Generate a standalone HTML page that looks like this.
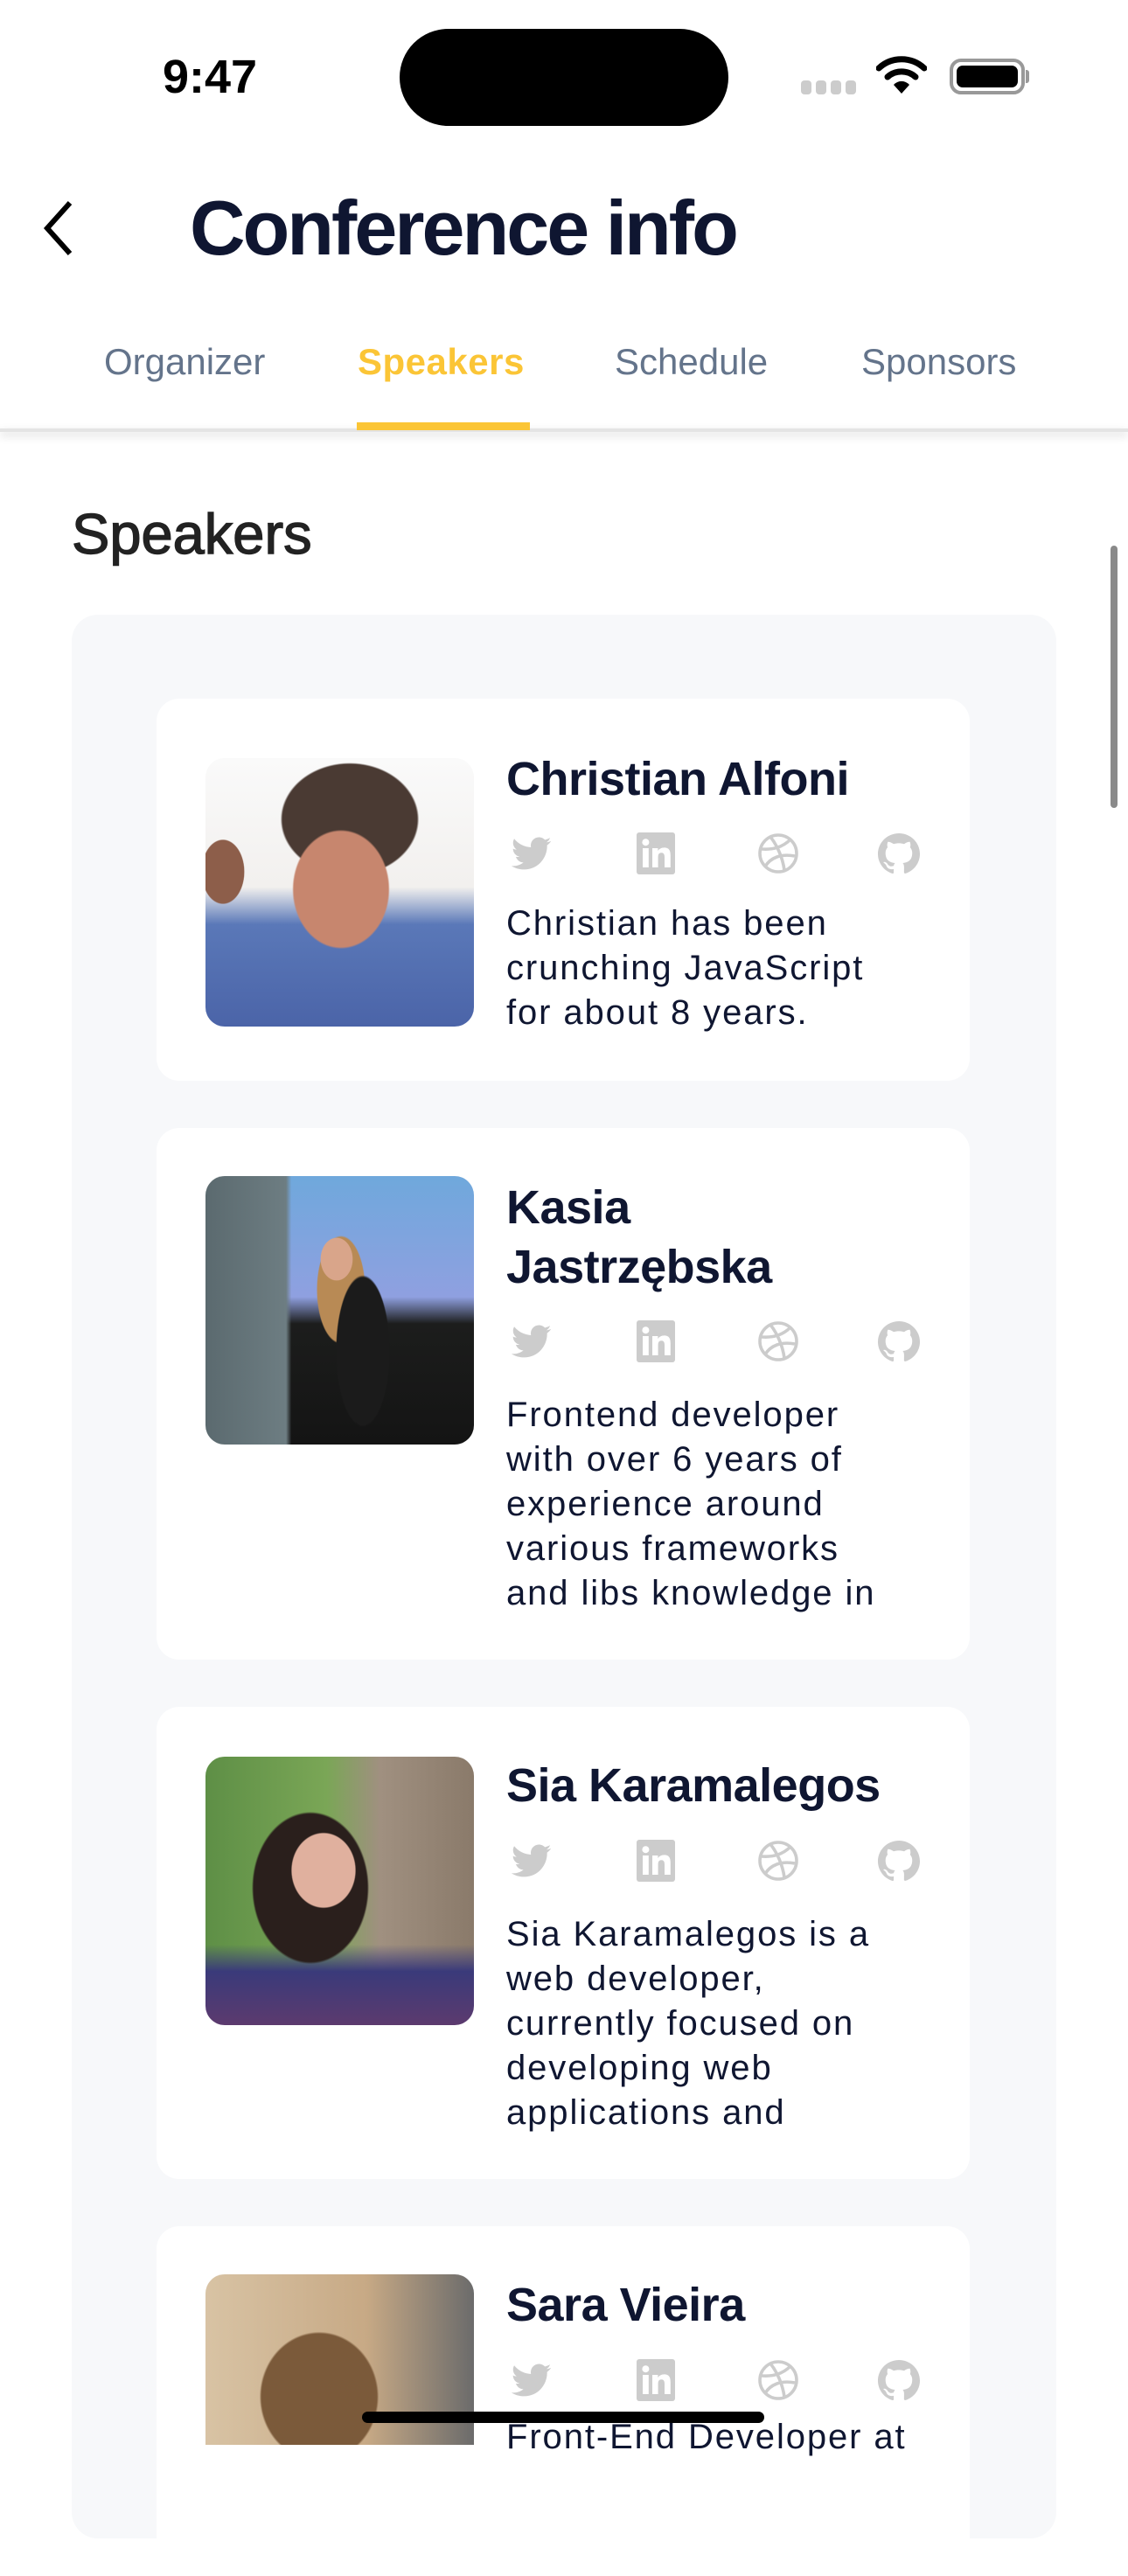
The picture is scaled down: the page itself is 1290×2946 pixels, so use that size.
<!DOCTYPE html>
<html><head><meta charset="utf-8"><style>
*{margin:0;padding:0;box-sizing:border-box}
body{width:1290px;height:2796px;position:relative;overflow:hidden;background:#fff;font-family:"Liberation Sans",sans-serif;color:#0f1631}
.a{position:absolute;white-space:nowrap}
.card{position:absolute;left:179px;width:930px;background:#fff;border-radius:26px}
.photo{position:absolute;left:235px;width:307px;height:307px;border-radius:22px;overflow:hidden}
.name{position:absolute;left:579px;font-size:54px;line-height:68px;font-weight:bold;letter-spacing:-0.5px;color:#0f1631}
.bio{position:absolute;left:579px;font-size:40px;line-height:51px;letter-spacing:1.9px;color:#0f1631;white-space:nowrap}
.ic{position:absolute;width:56px;height:48px}
</style></head><body>
<!-- status bar -->
<div class="a" style="left:186px;top:58px;font-size:54px;line-height:60px;font-weight:bold;color:#000">9:47</div>
<div class="a" style="left:457px;top:33px;width:376px;height:111px;background:#000;border-radius:56px"></div>
<div class="a" style="left:916px;top:92px;width:64px;height:16px">
<div style="position:absolute;left:0;width:12px;height:16px;border-radius:4px;background:#ccc"></div>
<div style="position:absolute;left:17px;width:12px;height:16px;border-radius:4px;background:#ccc"></div>
<div style="position:absolute;left:34px;width:12px;height:16px;border-radius:4px;background:#ccc"></div>
<div style="position:absolute;left:51px;width:12px;height:16px;border-radius:4px;background:#ccc"></div>
</div>
<svg class="a" style="left:1002px;top:64px" width="58" height="44" viewBox="0 0 58 44"><path d="M3 14 A38 38 0 0 1 55 14" stroke="#000" stroke-width="7" fill="none" stroke-linecap="round"/><path d="M13 24 A24 24 0 0 1 45 24" stroke="#000" stroke-width="7" fill="none" stroke-linecap="round"/><path d="M20 33 L29 43 L38 33 A12 12 0 0 0 20 33Z" fill="#000"/></svg>
<div class="a" style="left:1086px;top:67px;width:86px;height:41px;border:4px solid #999;border-radius:13px;padding:4px"><div style="width:100%;height:100%;background:#000;border-radius:7px"></div></div>
<div class="a" style="left:1173px;top:80px;width:4px;height:15px;background:#999;border-radius:0 3px 3px 0"></div>
<!-- header -->
<svg class="a" style="left:46px;top:228px" width="40" height="66" viewBox="0 0 40 66"><path d="M34 4 L8 33 L34 62" stroke="#000" stroke-width="6" fill="none"/></svg>
<div class="a" style="left:217px;top:211px;font-size:88px;line-height:100px;font-weight:bold;letter-spacing:-3px;color:#0f1631">Conference info</div>
<div class="a" style="left:119px;top:389px;font-size:42px;line-height:50px;color:#64748b">Organizer</div>
<div class="a" style="left:409px;top:389px;font-size:42px;line-height:50px;color:#fbc536;font-weight:bold;letter-spacing:0.5px">Speakers</div>
<div class="a" style="left:703px;top:389px;font-size:42px;line-height:50px;color:#64748b">Schedule</div>
<div class="a" style="left:985px;top:389px;font-size:42px;line-height:50px;color:#64748b">Sponsors</div>
<div class="a" style="left:0;top:490px;width:1290px;height:4px;box-shadow:0 4px 10px rgba(0,0,0,.18);background:#e4e4e4"></div>
<div class="a" style="left:408px;top:483px;width:198px;height:9px;background:#fbc536"></div>
<!-- content -->
<div class="a" style="left:82px;top:571px;font-size:65px;line-height:80px;color:#222;-webkit-text-stroke:1.4px #222">Speakers</div>
<div class="a" style="left:1270px;top:624px;width:8px;height:300px;background:#8a8a8a;border-radius:4px"></div>
<div class="a" style="left:82px;top:703px;width:1126px;height:2200px;background:#f7f8fa;border-radius:30px"></div>

<div class="card" style="top:799px;height:437px"></div>
<div class="card" style="top:1290px;height:608px"></div>
<div class="card" style="top:1952px;height:540px"></div>
<div class="card" style="top:2546px;height:400px"></div>

<!-- photos -->
<div class="photo" style="top:867px;background:
radial-gradient(ellipse 90px 110px at 155px 150px,#c7866e 60%,transparent 62%),
radial-gradient(ellipse 110px 90px at 165px 70px,#4a3a33 70%,transparent 72%),
radial-gradient(ellipse 40px 60px at 20px 130px,#8d5e4a 60%,transparent 62%),
linear-gradient(180deg,#fafafa 0%,#f2f0ee 48%,#5a78b8 62%,#4b64a8 100%)"></div>
<div class="photo" style="top:1345px;background:
radial-gradient(ellipse 50px 140px at 180px 200px,#1b1b1b 60%,transparent 62%),
radial-gradient(ellipse 30px 40px at 150px 95px,#d9a58a 60%,transparent 62%),
radial-gradient(ellipse 45px 100px at 155px 130px,#b88a55 60%,transparent 62%),
linear-gradient(90deg,#5b6a6f 0%,#6d7d82 30%,transparent 32%),
linear-gradient(180deg,#6fa8dc 0%,#8fa0e0 45%,#1c1d1c 55%,#141414 100%)"></div>
<div class="photo" style="top:2009px;background:
radial-gradient(ellipse 60px 70px at 135px 130px,#e0b09e 60%,transparent 62%),
radial-gradient(ellipse 100px 130px at 120px 150px,#2a1f1c 65%,transparent 67%),
linear-gradient(180deg,transparent 70%,#3a3a7a 80%,#5c3a6e 100%),
linear-gradient(90deg,#5e8f46 0%,#7aa656 45%,#a09080 65%,#8a7a6a 100%)"></div>
<div class="photo" style="top:2601px;height:195px;border-radius:22px 22px 0 0;background:
radial-gradient(ellipse 110px 120px at 130px 140px,#7b5a3a 60%,transparent 62%),
linear-gradient(90deg,#d8c3a4 0%,#c7a985 60%,#6b6b6b 100%)"></div>

<!-- names -->
<div class="name" style="top:857px">Christian Alfoni</div>
<div class="name" style="top:1347px">Kasia<br>Jastrzębska</div>
<div class="name" style="top:2008px">Sia Karamalegos</div>
<div class="name" style="top:2602px">Sara Vieira</div>

<!-- bios -->
<div class="bio" style="top:1031px">Christian has been<br>crunching JavaScript<br>for about 8 years.</div>
<div class="bio" style="top:1593px;height:260px;overflow:hidden">Frontend developer<br>with over 6 years of<br>experience around<br>various frameworks<br>and libs knowledge in</div>
<div class="bio" style="top:2187px;height:260px;overflow:hidden">Sia Karamalegos is a<br>web developer,<br>currently focused on<br>developing web<br>applications and</div>
<div class="bio" style="top:2762px">Front-End Developer at</div>

<!-- icon rows -->
<svg width="0" height="0" style="position:absolute"><defs>
<symbol id="tw" viewBox="0 0 24 24"><path fill="#cccccc" d="M23.643 4.937c-.835.37-1.732.62-2.675.733.962-.576 1.7-1.490 2.048-2.578-.9.534-1.897.922-2.958 1.13-.85-.904-2.06-1.47-3.4-1.47-2.572 0-4.658 2.086-4.658 4.66 0 .364.042.718.12 1.06-3.873-.195-7.304-2.05-9.602-4.868-.4.69-.63 1.49-.63 2.342 0 1.616.823 3.043 2.072 3.878-.764-.025-1.482-.234-2.11-.583v.06c0 2.257 1.605 4.140 3.737 4.568-.392.106-.803.162-1.227.162-.3 0-.593-.028-.877-.082.593 1.85 2.313 3.198 4.352 3.234-1.595 1.25-3.604 1.995-5.786 1.995-.376 0-.747-.022-1.112-.065 2.062 1.323 4.51 2.093 7.14 2.093 8.57 0 13.255-7.098 13.255-13.254 0-.2-.005-.402-.014-.602.91-.658 1.7-1.477 2.323-2.41z"/></symbol>
<symbol id="li" viewBox="0 0 24 24"><rect x="1" y="0" width="22" height="24" rx="1.5" fill="#cccccc"/><rect x="4.5" y="9" width="3.4" height="11" fill="#fff"/><circle cx="6.2" cy="5.6" r="2" fill="#fff"/><path d="M10 9h3.2v1.6c.6-1.1 1.9-1.9 3.6-1.9 3 0 3.6 2 3.6 4.6V20H17v-5.6c0-1.3-.1-2.8-1.8-2.8s-1.9 1.3-1.9 2.7V20H10z" fill="#fff"/></symbol>
<symbol id="dr" viewBox="0 0 24 24"><g fill="none" stroke="#cccccc" stroke-width="1.8"><circle cx="12" cy="12" r="10.5"/><path d="M2.5 9.5c6 .5 12-1 16.5-5.5"/><path d="M7.5 2.5c4 5 7 12 8 19"/><path d="M4.5 19.5c3-5 9-7.5 17-6"/></g></symbol>
<symbol id="gh" viewBox="0 0 24 24"><path fill="#cccccc" d="M12 .5C5.37.5 0 5.78 0 12.292c0 5.211 3.438 9.63 8.205 11.188.6.111.82-.254.82-.567 0-.28-.01-1.022-.015-2.005-3.338.711-4.042-1.582-4.042-1.582-.546-1.361-1.335-1.725-1.335-1.725-1.087-.731.084-.716.084-.716 1.205.082 1.838 1.215 1.838 1.215 1.07 1.803 2.809 1.282 3.495.981.108-.763.417-1.282.76-1.577-2.665-.295-5.466-1.309-5.466-5.827 0-1.287.465-2.339 1.235-3.164-.135-.298-.54-1.497.105-3.121 0 0 1.005-.316 3.3 1.209.96-.262 1.98-.392 3-.398 1.02.006 2.04.136 3 .398 2.28-1.525 3.285-1.209 3.285-1.209.645 1.624.24 2.823.12 3.121.765.825 1.23 1.877 1.23 3.164 0 4.53-2.805 5.527-5.475 5.817.42.354.81 1.077.81 2.182 0 1.578-.015 2.846-.015 3.229 0 .309.21.678.825.56C20.565 21.917 24 17.495 24 12.292 24 5.78 18.627.5 12 .5z"/></symbol>
</defs></svg>

<svg class="ic" style="left:579px;top:952px"><use href="#tw"/></svg>
<svg class="ic" style="left:722px;top:952px"><use href="#li"/></svg>
<svg class="ic" style="left:862px;top:952px"><use href="#dr"/></svg>
<svg class="ic" style="left:1000px;top:952px"><use href="#gh"/></svg>

<svg class="ic" style="left:579px;top:1510px"><use href="#tw"/></svg>
<svg class="ic" style="left:722px;top:1510px"><use href="#li"/></svg>
<svg class="ic" style="left:862px;top:1510px"><use href="#dr"/></svg>
<svg class="ic" style="left:1000px;top:1510px"><use href="#gh"/></svg>

<svg class="ic" style="left:579px;top:2104px"><use href="#tw"/></svg>
<svg class="ic" style="left:722px;top:2104px"><use href="#li"/></svg>
<svg class="ic" style="left:862px;top:2104px"><use href="#dr"/></svg>
<svg class="ic" style="left:1000px;top:2104px"><use href="#gh"/></svg>

<svg class="ic" style="left:579px;top:2698px"><use href="#tw"/></svg>
<svg class="ic" style="left:722px;top:2698px"><use href="#li"/></svg>
<svg class="ic" style="left:862px;top:2698px"><use href="#dr"/></svg>
<svg class="ic" style="left:1000px;top:2698px"><use href="#gh"/></svg>

<div class="a" style="left:414px;top:2758px;width:460px;height:13px;background:#000;border-radius:7px"></div>
</body></html>
